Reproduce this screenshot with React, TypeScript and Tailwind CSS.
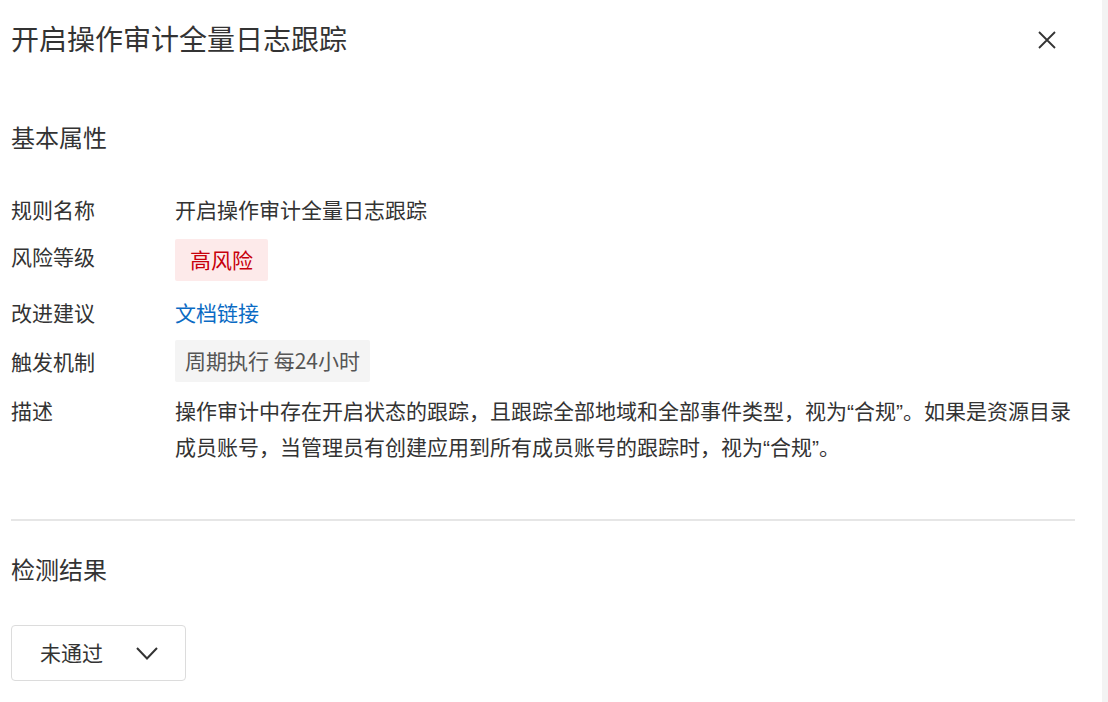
const Q = ({ children }: { children: string }) => (
  <span style={{ fontFamily: '"Liberation Sans", sans-serif' }}>{children}</span>
);

const rows = [
  { label: "规则名称", mt: "mt-0", lpt: "pt-0", value: <span className="leading-[35px]">开启操作审计全量日志跟踪</span> },
  {
    label: "风险等级",
    mt: "mt-[12px]",
    lpt: "pt-0",
    value: (
      <span className="inline-flex h-[42px] items-center rounded-[2px] bg-[#fdeaea] px-[15px] text-[#c7000b]">高风险</span>
    ),
  },
  {
    label: "改进建议",
    mt: "mt-[14px]",
    lpt: "pt-0",
    value: <a className="leading-[35px] text-[#0b6bc4]">文档链接</a>,
  },
  {
    label: "触发机制",
    mt: "mt-[10px]",
    lpt: "pt-[4px]",
    value: (
      <span className="inline-flex h-[42px] items-center rounded-[2px] bg-[#f4f4f4] px-[10px] text-[#555]">周期执行 每24小时</span>
    ),
  },
  {
    label: "描述",
    mt: "mt-[11px]",
    lpt: "pt-0",
    value: (
      <p className="leading-[35px]">
        操作审计中存在开启状态的跟踪，且跟踪全部地域和全部事件类型，视为<Q>“</Q>合规<Q>”</Q>。如果是资源目录成员账号，当管理员有创建应用到所有成员账号的跟踪时，视为<Q>“</Q>合规<Q>”</Q>。
      </p>
    ),
  },
];

export default function App() {
  return (
    <div
      className="flex h-[702px] w-[1108px] overflow-hidden bg-white text-[#333]"
      style={{ fontFamily: '"Noto Sans CJK SC", "Liberation Sans", sans-serif' }}
    >
      <div className="flex flex-1 flex-col pl-[11px] pr-[27px]">
        <header className="flex items-start justify-between pt-[18px]">
          <h1 className="text-[28px] leading-[40px]">开启操作审计全量日志跟踪</h1>
          <button className="mt-[13px] mr-[19px] text-[#333]">
            <svg width="18" height="18" viewBox="0 0 18 18" fill="none" stroke="currentColor" strokeWidth="1.8">
              <path d="M1 1l16 16M17 1L1 17" />
            </svg>
          </button>
        </header>

        <h2 className="mt-[62px] text-[24px] leading-[34px]">基本属性</h2>

        <dl className="mt-[38px] text-[21px]">
          {rows.map((r) => (
            <div key={r.label} className={`flex items-start ${r.mt}`}>
              <dt className={`w-[164px] shrink-0 leading-[35px] ${r.lpt}`}>{r.label}</dt>
              <dd className="flex-1">{r.value}</dd>
            </div>
          ))}
        </dl>

        <div className="mt-[54px] h-[2px] bg-[#e6e6e6]" />

        <h2 className="mt-[31px] text-[24px] leading-[34px]">检测结果</h2>

        <button className="mt-[39px] flex h-[56px] w-[175px] items-center rounded-[4px] border border-[#dcdcdc] pl-[28px] text-[21px]">
          <span>未通过</span>
          <svg className="ml-[33px]" width="22" height="13" viewBox="0 0 22 13" fill="none" stroke="#333" strokeWidth="2">
            <path d="M1 1l10 10.5L21 1" />
          </svg>
        </button>
      </div>
      <div className="w-[6px] bg-[#f3f3f3]" />
    </div>
  );
}
